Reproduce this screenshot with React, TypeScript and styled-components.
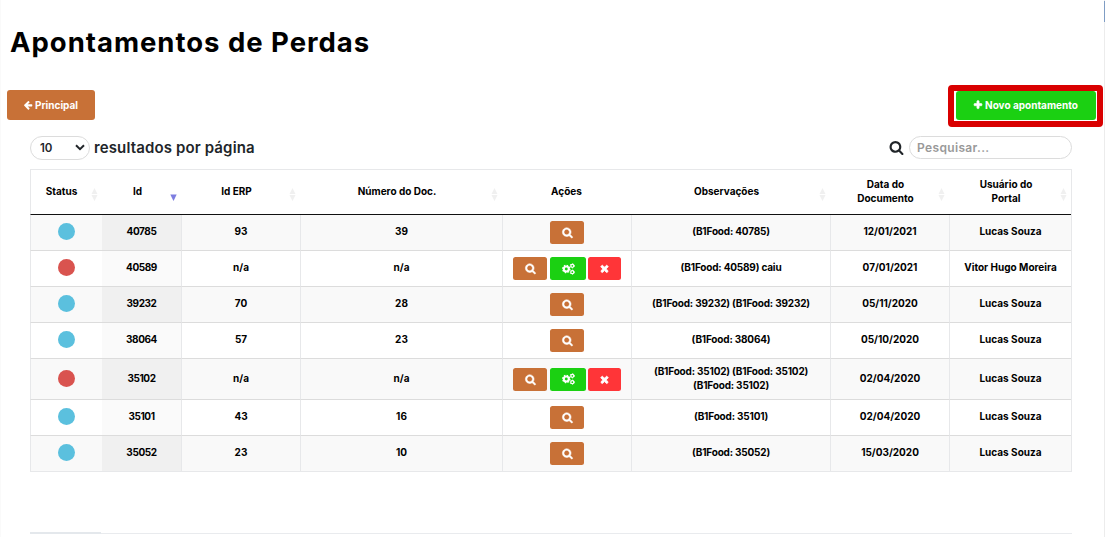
import React from "react";
import styled, { createGlobalStyle, css } from "styled-components";

const GlobalStyle = createGlobalStyle`
  * { box-sizing: border-box; }
  body {
    margin: 0;
    background: #fff;
    font-family: Inter, "Open Sans", sans-serif;
    color: #000;
  }
`;

const Page = styled.main`
  position: relative;
  width: 1105px;
  height: 537px;
  overflow: hidden;
  border-left: 1px solid #fafafa;
  box-shadow: inset -1px 0 #ececec;
`;

const ScrollMark = styled.div`
  position: absolute;
  top: 1px;
  right: 0;
  width: 1px;
  height: 21px;
  background: #7f9dc4;
`;

const Title = styled.h1`
  margin: 0;
  padding: 24px 0 0 9px;
  height: 90px;
  font-size: 27.5px;
  line-height: 36px;
  font-weight: 700;
  letter-spacing: 0.98px;
  white-space: nowrap;
`;

const ActionBar = styled.div`
  display: flex;
  justify-content: space-between;
  align-items: flex-start;
  height: 45px;
  padding: 0 2px 0 6px;
`;

const Button = styled.button<{ $tone: string; $width: number }>`
  display: flex;
  align-items: center;
  justify-content: center;
  gap: 2px;
  width: ${(p) => p.$width}px;
  height: 30px;
  padding: 0 1px 1px 0;
  border: 0;
  border-radius: 3px;
  background: ${(p) => p.$tone};
  color: #fff;
  font: 700 10px/14px Inter, sans-serif;
  white-space: nowrap;
`;

const Highlight = styled.div`
  margin-top: -5px;
  height: 42px;
  padding: 0 1px 0 2px;
  border: 6px solid #d90000;
  border-radius: 4px;
  background: #fff;

  ${Button} {
    height: 29px;
    padding-bottom: 2px;
  }
`;

const Content = styled.section`
  padding: 0 33px 0 29px;
`;

const Controls = styled.div`
  display: flex;
  align-items: center;
  justify-content: space-between;
  height: 34px;
  padding-bottom: 9px;
`;

const PageSize = styled.div`
  display: flex;
  align-items: center;
  gap: 4px;
  font-size: 15px;
  font-weight: 600;
  letter-spacing: 0.13px;
  color: #212529;
  white-space: nowrap;
`;

const Select = styled.div`
  display: flex;
  align-items: center;
  justify-content: space-between;
  width: 60px;
  height: 24px;
  padding: 0 4px 0 9px;
  border: 1px solid #dcdcdc;
  border-radius: 12px;
  font-size: 11.5px;
  letter-spacing: 0;
`;

const Search = styled.label`
  display: flex;
  align-items: center;
  gap: 5px;
  color: #212529;
`;

const SearchInput = styled.input`
  width: 163px;
  height: 23px;
  padding: 0 7px;
  border: 1px solid #dcdcdc;
  border-radius: 12px;
  outline: 0;
  background: #fff;
  font: 600 12px/16px Inter, sans-serif;
  letter-spacing: 0.35px;
  &::placeholder { color: #999; opacity: 1; }
`;

const Table = styled.table`
  width: 1042px;
  table-layout: fixed;
  border-collapse: separate;
  border-spacing: 0;
  border-right: 1px solid #e7e8ea;
  font-size: 10px;
  line-height: 14px;
  font-weight: 700;
  text-align: center;
`;

const Col = styled.col<{ $width: number }>`
  width: ${(p) => p.$width}px;
`;

const HeadCell = styled.th<{ $sortable: boolean }>`
  height: 46px;
  padding: 0 ${(p) => (p.$sortable ? 8 : 0)}px 2px 0;
  border-top: 1px solid #e7e8ea;
  border-bottom: 1px solid #111;
  position: relative;
  font-weight: 700;
  white-space: pre-line;
  &:first-child {
    padding-right: 10px;
    border-left: 1px solid #e7e8ea;
  }
`;

const SortMark = styled.svg`
  position: absolute;
  right: 4px;
  top: 18px;
`;

const Row = styled.tr<{ $height: number }>`
  height: ${(p) => p.$height}px;
  &:nth-child(odd) { background: #f9f9f9; }
  &:nth-child(odd) > td:nth-child(2) { background: #f0f0f0; }
  &:nth-child(even) > td:nth-child(2) { background: #fafafa; }
  &:last-child > td { border-bottom-color: #e7e8ea; }
`;

const Cell = styled.td<{ $line?: boolean; $spacing?: number; $graphic?: boolean }>`
  padding: 0 0 ${(p) => (p.$graphic ? 2 : 3)}px;
  border-bottom: 1px solid #dcdcdc;
  vertical-align: middle;
  white-space: pre-line;
  letter-spacing: ${(p) => p.$spacing ?? 0}px;
  ${(p) =>
    p.$line !== false &&
    css`
      border-left: 1px solid #e7e8ea;
    `}
`;

const Dot = styled.span<{ $open: boolean }>`
  display: block;
  width: 17px;
  height: 17px;
  margin: 0 auto;
  border-radius: 50%;
  background: ${(p) => (p.$open ? "#d9534f" : "#5bc0de")};
`;

const Actions = styled.div`
  display: flex;
  justify-content: center;
  gap: 3px;
  padding-top: 2px;
`;

const IconButton = styled.button<{ $tone: string; $width: number }>`
  display: flex;
  align-items: center;
  justify-content: center;
  width: ${(p) => p.$width}px;
  height: 23px;
  padding: 0;
  border: 0;
  border-radius: 2.5px;
  background: ${(p) => p.$tone};
  color: #fff;
  &:nth-child(3) { margin-left: -1px; }
`;

const FooterLine = styled.div`
  height: 2px;
  width: 1042px;
  margin-top: 60px;
  border-bottom: 1px solid #e9ebee;
`;

const FooterTab = styled.div`
  width: 71px;
  height: 2px;
  background: #e4e8ec;
`;

const PATHS = {
  search:
    "M1216 832q0-185-131.5-316.5t-316.5-131.5-316.5 131.5-131.5 316.5 131.5 316.5 316.5 131.5 316.5-131.5 131.5-316.5zm512 832q0 52-38 90t-90 38q-54 0-90-38l-343-342q-179 124-399 124-143 0-273.5-55.5t-225-150-150-225-55.5-273.5 55.5-273.5 150-225 225-150 273.5-55.5 273.5 55.5 225 150 150 225 55.5 273.5q0 220-124 399l343 343q37 37 37 90z",
  left:
    "M1664 896v128q0 53-32.5 90.5t-84.5 37.5h-704l293 294q38 36 38 90t-38 90l-75 76q-37 37-90 37-52 0-91-37l-651-652q-37-37-37-90 0-52 37-91l651-650q38-38 91-38 52 0 90 38l75 74q38 38 38 91t-38 91l-293 293h704q52 0 84.5 37.5t32.5 90.5z",
  plus:
    "M1600 736v192q0 40-28 68t-68 28h-416v416q0 40-28 68t-68 28h-192q-40 0-68-28t-28-68v-416h-416q-40 0-68-28t-28-68v-192q0-40 28-68t68-28h416v-416q0-40 28-68t68-28h192q40 0 68 28t28 68v416h416q40 0 68 28t28 68z",
  times:
    "M1490 1322q0 40-28 68l-136 136q-28 28-68 28t-68-28l-294-294-294 294q-28 28-68 28t-68-28l-136-136q-28-28-28-68t28-68l294-294-294-294q-28-28-28-68t28-68l136-136q28-28 68-28t68 28l294 294 294-294q28-28 68-28t68 28l136 136q28 28 28 68t-28 68l-294 294 294 294q28 28 28 68z",
};

const Icon = ({ name, size, weight = 0 }: { name: keyof typeof PATHS; size: number; weight?: number }) => (
  <svg
    width={size}
    height={size}
    viewBox="0 0 1792 1792"
    fill="currentColor"
    stroke="currentColor"
    strokeWidth={weight}
    overflow="visible"
  >
    <path d={PATHS[name]} />
  </svg>
);

const Gear = ({ x, y, r, w, teeth }: { x: number; y: number; r: number; w: number; teeth: number }) => {
  const outer = r + w / 2;
  const step = (2 * Math.PI * outer) / teeth;
  return (
    <g fill="none" stroke="currentColor">
      <circle cx={x} cy={y} r={r} strokeWidth={w} />
      <circle cx={x} cy={y} r={outer} strokeWidth={w * 0.7} strokeDasharray={`${step * 0.5} ${step * 0.5}`} />
    </g>
  );
};

const Cogs = () => (
  <svg width="13" height="12" viewBox="0 0 13 12">
    <Gear x={4.3} y={6} r={2.5} w={2.1} teeth={8} />
    <Gear x={10.3} y={2.8} r={1.5} w={1.25} teeth={6} />
    <Gear x={10.3} y={9.2} r={1.5} w={1.25} teeth={6} />
  </svg>
);

const COLUMNS = [
  { label: "Status", width: 72, sort: "both" },
  { label: "Id", width: 79, sort: "desc" },
  { label: "Id ERP", width: 119, sort: "both" },
  { label: "Número do Doc.", width: 202, sort: "both" },
  { label: "Ações", width: 129, sort: "none" },
  { label: "Observações", width: 199, sort: "both" },
  { label: "Data do\nDocumento", width: 119, sort: "both" },
  { label: "Usuário do\nPortal", width: 122, sort: "both" },
];

const ROWS = [
  { id: "40785", erp: "93", doc: "39", note: "(B1Food: 40785)", date: "12/01/2021", user: "Lucas Souza" },
  { id: "40589", erp: "n/a", doc: "n/a", note: "(B1Food: 40589) caiu", date: "07/01/2021", user: "Vitor Hugo Moreira" },
  { id: "39232", erp: "70", doc: "28", note: "(B1Food: 39232) (B1Food: 39232)", date: "05/11/2020", user: "Lucas Souza" },
  { id: "38064", erp: "57", doc: "23", note: "(B1Food: 38064)", date: "05/10/2020", user: "Lucas Souza" },
  { id: "35102", erp: "n/a", doc: "n/a", note: "(B1Food: 35102) (B1Food: 35102)\n(B1Food: 35102)", date: "02/04/2020", user: "Lucas Souza" },
  { id: "35101", erp: "43", doc: "16", note: "(B1Food: 35101)", date: "02/04/2020", user: "Lucas Souza" },
  { id: "35052", erp: "23", doc: "10", note: "(B1Food: 35052)", date: "15/03/2020", user: "Lucas Souza" },
];

export default function App() {
  return (
    <>
      <GlobalStyle />
      <Page>
        <ScrollMark />
        <Title>Apontamentos de Perdas</Title>
        <ActionBar>
          <Button $tone="#c87137" $width={88}>
            <Icon name="left" size={10} />
            Principal
          </Button>
          <Highlight>
            <Button $tone="#1bd012" $width={140}>
              <Icon name="plus" size={10} weight={120} />
              Novo apontamento
            </Button>
          </Highlight>
        </ActionBar>
        <Content>
          <Controls>
            <PageSize>
              <Select>
                10
                <svg width="10" height="7" viewBox="0 0 10 7" fill="none" stroke="currentColor" strokeWidth="2">
                  <path d="M1 1.3 5 5.2 9 1.3" />
                </svg>
              </Select>
              resultados por página
            </PageSize>
            <Search>
              <Icon name="search" size={15} />
              <SearchInput placeholder="Pesquisar..." />
            </Search>
          </Controls>
          <Table>
            <colgroup>
              {COLUMNS.map((c) => (
                <Col key={c.label} $width={c.width} />
              ))}
            </colgroup>
            <thead>
              <tr>
                {COLUMNS.map((c) => (
                  <HeadCell key={c.label} $sortable={c.sort !== "none"}>
                    {c.label}
                    {c.sort === "both" && (
                      <SortMark width="7" height="13" viewBox="0 0 7 13" fill="#f0f0f0">
                        <path d="M3.5 0 6.5 6H.5zM3.5 13 6.5 7H.5z" />
                      </SortMark>
                    )}
                    {c.sort === "desc" && (
                      <SortMark width="7" height="13" viewBox="0 0 7 13" fill="#7d7de0">
                        <path d="M3.5 13 6.7 6.5H.3z" />
                      </SortMark>
                    )}
                  </HeadCell>
                ))}
              </tr>
            </thead>
            <tbody>
              {ROWS.map((r) => {
                const open = r.erp === "n/a";
                return (
                  <Row key={r.id} $height={r.note.includes("\n") ? 41 : 36}>
                    <Cell $graphic>
                      <Dot $open={open} />
                    </Cell>
                    <Cell $line={false} $spacing={-0.4}>{r.id}</Cell>
                    <Cell>{r.erp}</Cell>
                    <Cell>{r.doc}</Cell>
                    <Cell $graphic>
                      <Actions>
                        <IconButton $tone="#c87137" $width={34}>
                          <Icon name="search" size={11} weight={90} />
                        </IconButton>
                        {open && (
                          <>
                            <IconButton $tone="#1bd012" $width={36}>
                              <Cogs />
                            </IconButton>
                            <IconButton $tone="#ff3538" $width={33}>
                              <Icon name="times" size={11} weight={140} />
                            </IconButton>
                          </>
                        )}
                      </Actions>
                    </Cell>
                    <Cell $spacing={-0.18}>{r.note}</Cell>
                    <Cell>{r.date}</Cell>
                    <Cell>{r.user}</Cell>
                  </Row>
                );
              })}
            </tbody>
          </Table>
          <FooterLine>
            <FooterTab />
          </FooterLine>
        </Content>
      </Page>
    </>
  );
}
